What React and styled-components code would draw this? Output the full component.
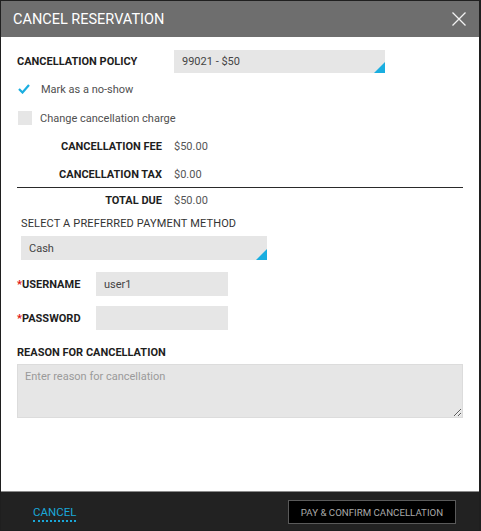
import React from "react";
import styled, { createGlobalStyle } from "styled-components";

const Global = createGlobalStyle`
  html, body { margin: 0; padding: 0; background: #fff; }
  body { font-family: "Roboto", "Liberation Sans", sans-serif; }
  * { box-sizing: border-box; }
`;

const Dialog = styled.div`
  width: 481px;
  height: 531px;
  display: flex;
  flex-direction: column;
  border: 1px solid #1f1f1f;
  border-right-width: 2px;
  background: #fff;
`;

const Header = styled.div`
  height: 36px;
  flex: none;
  background: #6e6e6e;
  display: flex;
  align-items: center;
  justify-content: space-between;
  padding: 0 12px 0 12px;
`;

const Title = styled.h1`
  margin: 0;
  font-size: 14.5px;
  font-weight: 400;
  color: #fff;
`;

const Close = styled.button`
  border: 0;
  background: none;
  padding: 0;
  width: 16px;
  height: 16px;
  display: flex;
  cursor: pointer;
`;

const Body = styled.div`
  flex: 1;
  padding: 0 16px;
  display: flex;
  flex-direction: column;
`;

const Row = styled.div`
  display: flex;
  align-items: center;
  height: ${(p) => p.$h}px;
  flex: none;
  margin-top: ${(p) => p.$mt || 0}px;
`;

const Label = styled.div`
  width: ${(p) => p.$w}px;
  flex: none;
  font-size: 11px;
  font-weight: 700;
  color: #1e1e1e;
  text-align: ${(p) => (p.$right ? "right" : "left")};
  padding-right: ${(p) => (p.$right ? 12 : 0)}px;
`;

const Value = styled.div`
  font-size: 11px;
  color: #555;
`;

const Select = styled.div`
  position: relative;
  width: ${(p) => p.$w}px;
  height: 100%;
  background: #e6e6e6;
  font-size: 11px;
  color: #444;
  display: flex;
  align-items: center;
  padding-left: 8px;
  margin-left: ${(p) => p.$ml || 0}px;
  &::after {
    content: "";
    position: absolute;
    right: 0;
    bottom: 0;
    border-style: solid;
    border-width: 0 0 11px 11px;
    border-color: transparent transparent #1aaee0 transparent;
  }
`;

const CheckText = styled.span`
  font-size: 11px;
  color: #505050;
  margin-left: ${(p) => p.$ml}px;
`;

const Box = styled.span`
  width: 14px;
  height: 14px;
  background: #e6e6e6;
  flex: none;
  margin-left: 1px;
`;

const Divider = styled.hr`
  margin: 5px 0 0 0;
  border: 0;
  border-top: 1px solid #2a2a2a;
  height: 0;
  flex: none;
`;

const Caption = styled.div`
  font-size: 11px;
  color: #333;
  height: 14px;
  line-height: 14px;
  flex: none;
  margin: 9px 0 0 4px;
  letter-spacing: 0.15px;
`;

const Required = styled.span`
  color: #e01010;
`;

const Input = styled.div`
  width: 132px;
  height: 100%;
  background: #e6e6e6;
  font-size: 11px;
  color: #444;
  display: flex;
  align-items: center;
  padding-left: 8px;
`;

const Textarea = styled.textarea`
  margin-top: 5px;
  flex: none;
  width: 446px;
  height: 54px;
  background: #e6e6e6;
  border: 1px solid #dcdcdc;
  font-family: inherit;
  font-size: 11px;
  color: #444;
  padding: 5px 7px;
  resize: vertical;
  &::placeholder { color: #9a9a9a; }
`;

const Footer = styled.div`
  height: 39px;
  flex: none;
  background: #222;
  border-top: 1px solid #8a8a8a;
  display: flex;
  align-items: center;
  justify-content: space-between;
  padding: 0 23px 0 32px;
`;

const CancelLink = styled.a`
  font-size: 11.5px;
  color: #1aa7d8;
  border-bottom: 2px dotted #1aa7d8;
  padding-bottom: 1px;
  margin-top: 4px;
  cursor: pointer;
`;

const Confirm = styled.button`
  width: 168px;
  height: 24px;
  background: #000;
  border: 1px solid #5a5a5a;
  color: #a9a9a9;
  font-family: inherit;
  font-size: 9.7px;
  white-space: nowrap;
  padding: 0;
  margin-top: 2px;
`;

function Check() {
  return (
    <svg width="12" height="10" viewBox="0 0 12 10" style={{ flex: "none", marginLeft: 1 }}>
      <polyline points="1,5 4.5,8.5 11,1" fill="none" stroke="#1aaee0" strokeWidth="2.2" />
    </svg>
  );
}

export default function App() {
  return (
    <>
      <Global />
      <Dialog>
        <Header>
          <Title>CANCEL RESERVATION</Title>
          <Close aria-label="close">
            <svg width="16" height="16" viewBox="0 0 16 16">
              <path d="M1.5 1.5 L14.5 14.5 M14.5 1.5 L1.5 14.5" stroke="#f2f2f2" strokeWidth="1.3" />
            </svg>
          </Close>
        </Header>
        <Body>
          <Row $mt={13} $h={23}>
            <Label $w={157}>CANCELLATION POLICY</Label>
            <Select $w={211}>99021 - $50</Select>
          </Row>
          <Row $mt={9} $h={14}>
            <Check />
            <CheckText $ml={11}>Mark as a no-show</CheckText>
          </Row>
          <Row $mt={15} $h={14}>
            <Box />
            <CheckText $ml={8}>Change cancellation charge</CheckText>
          </Row>
          <Row $mt={13} $h={16}>
            <Label $w={157} $right>CANCELLATION FEE</Label>
            <Value>$50.00</Value>
          </Row>
          <Row $mt={12} $h={16}>
            <Label $w={157} $right>CANCELLATION TAX</Label>
            <Value>$0.00</Value>
          </Row>
          <Divider />
          <Row $mt={4} $h={16}>
            <Label $w={157} $right>TOTAL DUE</Label>
            <Value>$50.00</Value>
          </Row>
          <Caption>SELECT A PREFERRED PAYMENT METHOD</Caption>
          <Row $mt={5} $h={24}>
            <Select $w={246} $ml={4}>Cash</Select>
          </Row>
          <Row $mt={12} $h={24}>
            <Label $w={79}><Required>*</Required>USERNAME</Label>
            <Input>user1</Input>
          </Row>
          <Row $mt={10} $h={24}>
            <Label $w={79}><Required>*</Required>PASSWORD</Label>
            <Input />
          </Row>
          <Row $mt={15} $h={14}>
            <Label $w={300}>REASON FOR CANCELLATION</Label>
          </Row>
          <Textarea placeholder="Enter reason for cancellation" />
        </Body>
        <Footer>
          <CancelLink>CANCEL</CancelLink>
          <Confirm>PAY &amp; CONFIRM CANCELLATION</Confirm>
        </Footer>
      </Dialog>
    </>
  );
}
